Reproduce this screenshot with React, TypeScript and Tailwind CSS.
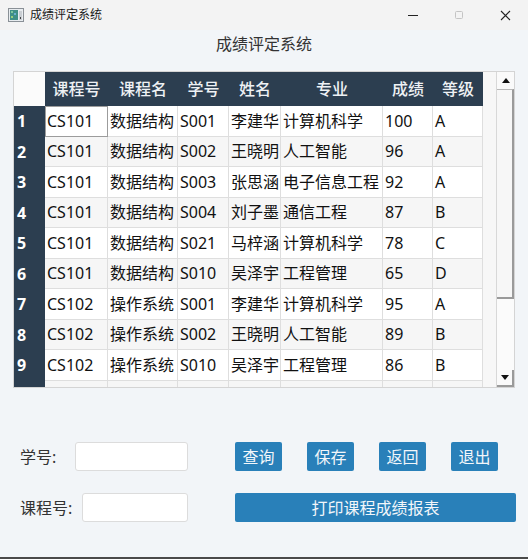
import React from "react";

const FONT = "font-['Noto_Sans','Noto_Sans_CJK_SC',sans-serif]";

interface Row {
  code: string;
  course: string;
  sid: string;
  name: string;
  major: string;
  score: string;
  grade: string;
}

const rows: Row[] = [
  { code: "CS101", course: "数据结构", sid: "S001", name: "李建华", major: "计算机科学", score: "100", grade: "A" },
  { code: "CS101", course: "数据结构", sid: "S002", name: "王晓明", major: "人工智能", score: "96", grade: "A" },
  { code: "CS101", course: "数据结构", sid: "S003", name: "张思涵", major: "电子信息工程", score: "92", grade: "A" },
  { code: "CS101", course: "数据结构", sid: "S004", name: "刘子墨", major: "通信工程", score: "87", grade: "B" },
  { code: "CS101", course: "数据结构", sid: "S021", name: "马梓涵", major: "计算机科学", score: "78", grade: "C" },
  { code: "CS101", course: "数据结构", sid: "S010", name: "吴泽宇", major: "工程管理", score: "65", grade: "D" },
  { code: "CS102", course: "操作系统", sid: "S001", name: "李建华", major: "计算机科学", score: "95", grade: "A" },
  { code: "CS102", course: "操作系统", sid: "S002", name: "王晓明", major: "人工智能", score: "89", grade: "B" },
  { code: "CS102", course: "操作系统", sid: "S010", name: "吴泽宇", major: "工程管理", score: "86", grade: "B" },
];

const columns: { key: keyof Row; label: string; width: string }[] = [
  { key: "code", label: "课程号", width: "w-[63px]" },
  { key: "course", label: "课程名", width: "w-[70px]" },
  { key: "sid", label: "学号", width: "w-[51px]" },
  { key: "name", label: "姓名", width: "w-[52px]" },
  { key: "major", label: "专业", width: "w-[102px]" },
  { key: "score", label: "成绩", width: "w-[50px]" },
  { key: "grade", label: "等级", width: "w-[50px]" },
];

function AppIcon() {
  return (
    <svg width="16" height="14" viewBox="0 0 16 14">
      <rect x="0.5" y="0.5" width="15" height="13" fill="#e8ecef" stroke="#8a9096" />
      <rect x="2" y="2" width="8" height="10" fill="#3f8f86" />
      <rect x="3" y="3" width="2" height="2" fill="#7fc8a0" />
      <rect x="6" y="5" width="2" height="2" fill="#6ab0d0" />
      <rect x="3" y="8" width="2" height="2" fill="#9ad07a" />
      <rect x="11" y="3" width="3" height="9" fill="#c9ced3" />
      <rect x="12" y="9" width="1" height="2" fill="#444" />
    </svg>
  );
}

function TitleBar() {
  return (
    <div className="flex h-[30px] items-center bg-[#f3f3f3] pl-[8px]">
      <AppIcon />
      <span className="ml-[6px] text-[12px] text-[#1a1a1a]">成绩评定系统</span>
      <div className="ml-auto flex items-center">
        <div className="flex w-[46px] justify-center">
          <svg width="10" height="10" viewBox="0 0 10 10">
            <line x1="0" y1="5.5" x2="10" y2="5.5" stroke="#222" strokeWidth="1" />
          </svg>
        </div>
        <div className="flex w-[46px] justify-center">
          <svg width="10" height="10" viewBox="0 0 10 10">
            <rect x="1.5" y="1.5" width="7" height="7" rx="1" fill="none" stroke="#c4c4c4" strokeWidth="1" />
          </svg>
        </div>
        <div className="flex w-[46px] justify-center">
          <svg width="11" height="11" viewBox="0 0 11 11">
            <path d="M1 1 L10 10 M10 1 L1 10" stroke="#222" strokeWidth="1.1" />
          </svg>
        </div>
      </div>
    </div>
  );
}

function ScrollBar() {
  return (
    <div className="flex w-[18px] flex-col border-l border-[#d8d8d8] bg-[#f3f3f3]">
      <div className="flex h-[17px] items-center justify-center bg-[#fafafa]">
        <svg width="8" height="5" viewBox="0 0 8 5">
          <path d="M0 5 L4 0 L8 5 Z" fill="#111" />
        </svg>
      </div>
      <div className="h-[210px] border-t border-[#b8b8b8] border-r-2 border-b-2 border-r-[#9a9a9a] border-b-[#9a9a9a] bg-[#f7f7f7]" />
      <div className="flex-1 bg-[#fbfbfb]" />
      <div className="flex h-[17px] items-center justify-center border-r-2 border-b-2 border-[#9a9a9a] bg-[#fafafa]">
        <svg width="8" height="5" viewBox="0 0 8 5">
          <path d="M0 0 L4 5 L8 0 Z" fill="#111" />
        </svg>
      </div>
    </div>
  );
}

function GradeTable() {
  return (
    <div className="ml-[13px] flex h-[317px] w-[502px] border border-[#d4d4d4] bg-[#f7f7f7]">
      <div className="flex-1 overflow-hidden">
        <div className="flex h-[34px]">
          <div className="w-[31px] bg-[#fbfbfb]" />
          {columns.map((c) => (
            <div
              key={c.key}
              className={`${c.width} flex items-center justify-center bg-[#2c3e50] text-[16px] font-medium text-[#eef1f4]`}
            >
              {c.label}
            </div>
          ))}
        </div>
        {[...rows, null].map((r, i) => (
          <div key={i} className="flex h-[30.5px]">
            <div className="flex w-[31px] items-center bg-[#2c3e50] pl-[3px] text-[16px] font-bold text-white">
              {r ? i + 1 : ""}
            </div>
            {columns.map((c, ci) => (
              <div
                key={c.key}
                className={`${c.width} flex items-center border-r border-b border-[#dedede] pl-[2px] text-[16px] text-[#111] ${
                  i % 2 === 0 ? "bg-white" : "bg-[#f6f6f6]"
                } ${i === 0 && ci === 0 ? "outline outline-1 -outline-offset-1 outline-[#9c9c9c]" : ""}`}
              >
                {r ? r[c.key] : ""}
              </div>
            ))}
          </div>
        ))}
      </div>
      <ScrollBar />
    </div>
  );
}

function Btn({ children, wide }: { children: React.ReactNode; wide?: boolean }) {
  return (
    <button
      className={`${wide ? "w-[281px]" : "w-[47px]"} h-[29px] rounded-[2px] bg-[#2980b9] text-[16px] text-[#f2f6fa]`}
    >
      {children}
    </button>
  );
}

export default function App() {
  return (
    <div className={`${FONT} flex h-[559px] w-[528px] flex-col overflow-hidden border-b-2 border-[#4a4a4a] bg-[#f2f5f8]`}>
      <TitleBar />
      <div className="flex h-[27px] items-center justify-center text-[16px] text-[#333]">成绩评定系统</div>
      <div className="mt-[14px]">
        <GradeTable />
      </div>
      <div className="mt-[53px] flex flex-col gap-[20px] pl-[20px]">
        <div className="flex h-[31px] items-center">
          <span className="w-[55px] text-[16px] text-[#333]">学号:</span>
          <div className="h-[29px] w-[113px] rounded-[3px] border border-[#dcdcdc] bg-white" />
          <div className="ml-[47px] flex gap-[25px]">
            <Btn>查询</Btn>
            <Btn>保存</Btn>
            <Btn>返回</Btn>
            <Btn>退出</Btn>
          </div>
        </div>
        <div className="flex h-[31px] items-center">
          <span className="w-[62px] text-[16px] text-[#333]">课程号:</span>
          <div className="h-[29px] w-[106px] rounded-[3px] border border-[#dcdcdc] bg-white" />
          <div className="ml-[47px]">
            <Btn wide>打印课程成绩报表</Btn>
          </div>
        </div>
      </div>
    </div>
  );
}
